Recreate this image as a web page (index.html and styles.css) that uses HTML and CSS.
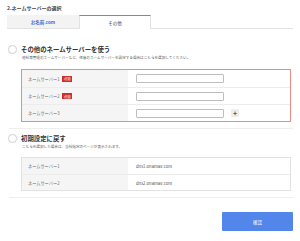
FILE: index.html
```html
<!DOCTYPE html>
<html lang="ja">
<head>
    <meta charset="UTF-8">
    <title>ネームサーバーの選択</title>
    <link rel="stylesheet" href="styles.css">
</head>
<body>
    <div class="page">
        <h2 class="title">2.ネームサーバーの選択</h2>

        <!-- Tabs -->
        <div class="tabs">
            <a href="#" class="tab">お名前.com</a>
            <a href="#" class="tab active">その他</a>
        </div>

        <!-- Other name servers -->
        <div class="option">
            <div class="option-head">
                <span class="radio"></span>
                <h3>その他のネームサーバーを使う</h3>
            </div>
            <p class="desc">他社等管理のネームサーバーなど、任意のネームサーバーを設定する場合はこちらを選択してください。</p>

            <div class="ns-box">
                <div class="ns-row">
                    <div class="ns-label">ネームサーバー1 <span class="badge">必須</span></div>
                    <div class="ns-value"><input type="text"></div>
                </div>
                <div class="ns-row">
                    <div class="ns-label">ネームサーバー2 <span class="badge">必須</span></div>
                    <div class="ns-value"><input type="text"></div>
                </div>
                <div class="ns-row">
                    <div class="ns-label">ネームサーバー3</div>
                    <div class="ns-value"><input type="text"><span class="plus">+</span></div>
                </div>
            </div>
        </div>

        <hr class="sep">

        <!-- Default -->
        <div class="option option-default">
            <div class="option-head">
                <span class="radio"></span>
                <h3>初期設定に戻す</h3>
            </div>
            <p class="desc">こちらを選択した場合は、当社指定のページが表示されます。</p>

            <div class="ns-table">
                <div class="ns-row">
                    <div class="ns-label">ネームサーバー1</div>
                    <div class="ns-value">dns1.onamae.com</div>
                </div>
                <div class="ns-row">
                    <div class="ns-label">ネームサーバー2</div>
                    <div class="ns-value">dns2.onamae.com</div>
                </div>
            </div>
        </div>

        <hr class="sep">

        <div class="actions">
            <button>確認</button>
        </div>
    </div>
</body>
</html>
```

FILE: styles.css
```css
* {
    margin: 0;
    padding: 0;
    box-sizing: border-box;
    font-family: 'Noto Sans CJK JP', 'Noto Sans', sans-serif;
}

body {
    background: #fff;
    color: #333;
}

.page {
    width: 300px;
    padding: 5px 7px 0;
}

.title {
    font-size: 5px;
    line-height: 6px;
    font-weight: 600;
    color: #444;
    margin-bottom: 4px;
}

/* Tabs */
.tabs {
    display: flex;
    height: 14px;
    border-bottom: 1px solid #e2e2e2;
}

.tab {
    width: 72px;
    display: flex;
    align-items: center;
    justify-content: center;
    font-size: 4.5px;
    text-decoration: none;
    background: #f3f3f3;
    color: #3b6fcf;
    font-weight: 600;
}

.tab.active {
    background: #fff;
    color: #444;
    font-weight: 400;
    border-top: 1px solid #e06262;
    border-left: 1px solid #e2e2e2;
    border-right: 1px solid #e2e2e2;
    margin-bottom: -1px;
}

/* Options */
.option {
    margin-top: 15px;
}

.option-default {
    margin-top: 4px;
}

.option-head {
    display: flex;
    align-items: center;
    height: 11px;
}

.radio {
    width: 9px;
    height: 9px;
    border-radius: 50%;
    border: 1px solid #d4d4d4;
    background: #fff;
    box-shadow: 0 0 1px rgba(0, 0, 0, 0.1);
    margin-left: 1px;
    margin-right: 4px;
}

.option-head h3 {
    font-size: 6.4px;
    font-weight: 700;
    color: #333;
}

.desc {
    font-size: 3.6px;
    line-height: 6px;
    color: #555;
    padding-left: 15px;
}

/* Name server box */
.ns-box,
.ns-table {
    margin: 8px 2px 0 14px;
    border: 1px solid #ea8c84;
}

.ns-table {
    margin-top: 7px;
    border-color: #e2e2e2;
}

.ns-row {
    display: flex;
    height: 17px;
}

.ns-row + .ns-row {
    border-top: 1px solid #ececec;
}

.ns-table .ns-row {
    height: 16px;
}

.ns-label {
    width: 106px;
    background: #f5f5f5;
    display: flex;
    align-items: center;
    padding-left: 6px;
    font-size: 4.2px;
    color: #666;
}

.badge {
    background: #cf2f2b;
    color: #fff;
    font-size: 3.4px;
    padding: 0.5px 1.5px;
    margin-left: 3px;
    line-height: 5px;
}

.ns-value {
    flex: 1;
    display: flex;
    align-items: center;
    padding-left: 8px;
    font-size: 4.2px;
    color: #555;
}

.ns-value input {
    width: 88px;
    height: 9px;
    border: 1px solid #bdbdbd;
    border-radius: 1px;
    background: #fff;
}

.plus {
    width: 8px;
    height: 8px;
    margin-left: 7px;
    display: flex;
    align-items: center;
    justify-content: center;
    background: #eee;
    border-radius: 1px;
    font-size: 7px;
    font-weight: 700;
    color: #555;
    line-height: 1;
}

.sep {
    border: none;
    border-top: 1px solid #eee;
    margin: 6px 0 0 2px;
}

.actions {
    display: flex;
    justify-content: flex-end;
    margin-top: 14px;
}

button {
    width: 71px;
    height: 19px;
    border: none;
    border-radius: 1px;
    background: #5286ea;
    color: #fff;
    font-size: 4.5px;
}
```
